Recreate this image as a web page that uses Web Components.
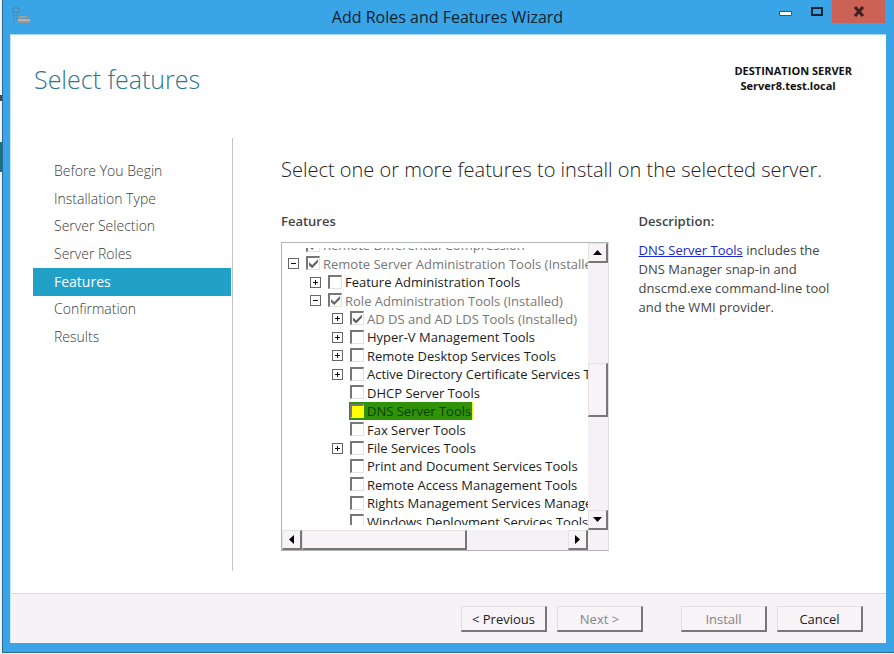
<!DOCTYPE html>
<html lang="en">
<head>
<meta charset="utf-8">
<title>Add Roles and Features Wizard</title>
<style>
html, body { margin: 0; }
body { background: #fdfdfd; color: #222; font: 13px/18px "Open Sans", "Noto Sans", sans-serif; }
</style>
</head>
<body>
<wizard-window caption="Add Roles and Features Wizard">
  <wizard-header slot="header" heading="Select features" server="Server8.test.local"></wizard-header>
  <wizard-steps slot="steps" current="Features"></wizard-steps>
  <feature-picker></feature-picker>
  <wizard-footer slot="footer"></wizard-footer>
</wizard-window>

<script>
function define(name, render) {
  customElements.define(name, class extends HTMLElement {
    connectedCallback() {
      if (!this.shadowRoot) {
        this.attachShadow({ mode: 'open' }).innerHTML = '<style>*{box-sizing:border-box}button{font:inherit;color:inherit;padding:0;margin:0}</style>' + render(this);
      }
    }
  });
}

define('wizard-window', el => `
<style>
:host { display: flex; flex-direction: column; box-sizing: border-box; min-height: 100vh; padding: 0 0 1px 2px;
  background: linear-gradient(#3f4a50,#3f4a50) 0 95px / 2px 6px no-repeat, linear-gradient(#17727c,#17727c) 0 142px / 2px 30px no-repeat, #eef4f7; }
.frame { flex: 1; display: flex; flex-direction: column; background: #39a5e6; border: solid #2a6c95; border-width: 0 0 1px 1px; padding: 0 8px 9px 7px; }
header { height: 34px; padding-right: 1px; display: grid; grid-template-columns: 116px 1fr 116px; align-items: start; }
header h1 { margin: 0; font-size: 16px; line-height: 34px; font-weight: 400; text-align: center; color: #10222e; white-space: nowrap; }
.app { margin: 6px 0 0 1px; opacity: .75; }
.ctl { display: flex; justify-content: flex-end; }
.ctl button { flex: none; border: 0; background: none; height: 23px; width: 31px; display: flex; align-items: center; justify-content: center; }
.ctl .close { width: 53px; background: #cc6155; }
.page { flex: 1; display: flex; flex-direction: column; background: #fff; border-left: 1px solid #c9e7fa; border-top: 1px solid #a9d6f4; }
.body { flex: 1; display: grid; grid-template-columns: 200px minmax(0, 1fr); column-gap: 48px; padding: 0 0 22px 22px; }
</style>
<div class="frame">
  <header>
    <svg class="app" width="22" height="20" viewBox="0 0 22 20" fill="none" aria-hidden="true">
      <path d="M2 2h6v4H2z" fill="#4f9dca" stroke="#467f9f"/><path d="M3 7v10M6 7v7h2" stroke="#5189a8"/><path d="M3 4h4" stroke="#6fadcf"/>
      <path d="M6 10l2-1h9l2 3v4H7z" fill="#858e93"/><path d="M8 11h8" stroke="#b7c0c4"/><path d="M7 13h12v3q-6 2-12 0z" fill="#e2b795"/><path d="M8 16h10" stroke="#b56d48"/>
    </svg>
    <h1>${el.getAttribute('caption')}</h1>
    <div class="ctl">
      <button aria-label="Minimize"><svg width="15" height="23"><path d="M1.5 11.500h12v4h-12z" fill="#fff" stroke="#33586e"/></svg></button>
      <button aria-label="Maximize"><svg width="13" height="23"><path d="M2 8h10v7H2z" fill="none" stroke="#17252e" stroke-width="2"/></svg></button>
      <button class="close" aria-label="Close"><svg width="12" height="11" viewBox="0 0 12 11"><path d="M2 1l8 9M10 1L2 10" stroke="#3b211f" stroke-width="3"/></svg></button>
    </div>
  </header>
  <div class="page">
    <slot name="header"></slot>
    <div class="body"><slot name="steps"></slot><slot></slot></div>
    <slot name="footer"></slot>
  </div>
</div>`);

define('wizard-header', el => `
<style>
:host { display: flex; justify-content: space-between; align-items: flex-start; height: 103px; padding: 24px 34px 0 23px; box-sizing: border-box; }
h2 { margin: 0; font-size: 25px; line-height: 40px; font-weight: 300; color: #2b7590; }
.dest { margin-top: 4px; font-size: 11px; line-height: 15px; font-weight: 700; color: #111; }
p { margin: 0; } p + p { padding-left: 6px; }
</style>
<h2>${el.getAttribute('heading')}</h2>
<div class="dest"><p>DESTINATION SERVER</p><p>${el.getAttribute('server')}</p></div>`);

define('wizard-steps', el => `
<style>
:host { display: block; border-right: 1px solid #c3c3c3; padding: 19px 1px 0 0; }
ol { list-style: none; margin: 0; padding: 0; height: 194px; display: grid; grid-auto-rows: 1fr; }
a { height: 100%; display: flex; align-items: center; padding-left: 21px; color: #3a3a3a; font-size: 14px; font-weight: 300; text-decoration: none; }
a[aria-current] { background: #22a1c8; color: #fff; font-weight: 400; }
</style>
<nav aria-label="Steps"><ol>${['Before You Begin', 'Installation Type', 'Server Selection', 'Server Roles', 'Features', 'Confirmation', 'Results']
  .map(s => `<li><a href="#"${s === el.getAttribute('current') ? ' aria-current="step"' : ''}>${s}</a></li>`).join('')}</ol></nav>`);

define('feature-picker', () => `
<style>
:host { display: block; padding-top: 16px; }
h3 { margin: 0; font-size: 20px; line-height: 32px; font-weight: 350; color: #222; white-space: nowrap; }
.cols { display: grid; grid-template-columns: minmax(0, 327fr) minmax(0, 247fr); gap: 30px; margin-top: 26px; }
h4 { margin: 0; font-size: 13px; line-height: 18px; font-weight: 600; color: #444; }
feature-tree { margin-top: 12px; }
p { margin: 11px 0 0; max-width: 200px; line-height: 19px; color: #444; }
a { color: #1a28cc; }
</style>
<h3>Select one or more features to install on the selected server.</h3>
<div class="cols">
  <section><h4>Features</h4><feature-tree></feature-tree></section>
  <section><h4>Description:</h4><p><a href="#">DNS Server Tools</a> includes the DNS Manager snap-in and dnscmd.exe command-line tool and the WMI provider.</p></section>
</div>`);

define('feature-tree', () => `
<style>
:host { display: grid; grid-template-columns: minmax(0, 1fr) 20px; border: 1px solid #b5b5b5; border-right-color: #ddd; background: #fff; }
.view { height: 277px; margin: 5px 0; overflow: hidden; }
.rows { height: 295px; margin-top: -12px; display: grid; grid-auto-rows: 1fr; }
</style>
<div class="view"><div class="rows" role="tree">
<tree-row level="0" checked disabled>Remote Differential Compression</tree-row>
<tree-row level="0" toggle="minus" checked disabled>Remote Server Administration Tools (Installed)</tree-row>
<tree-row level="1" toggle="plus">Feature Administration Tools</tree-row>
<tree-row level="1" toggle="minus" checked disabled>Role Administration Tools (Installed)</tree-row>
<tree-row level="2" toggle="plus" checked disabled>AD DS and AD LDS Tools (Installed)</tree-row>
<tree-row level="2" toggle="plus">Hyper-V Management Tools</tree-row>
<tree-row level="2" toggle="plus">Remote Desktop Services Tools</tree-row>
<tree-row level="2" toggle="plus">Active Directory Certificate Services Tools</tree-row>
<tree-row level="2">DHCP Server Tools</tree-row>
<tree-row level="2" selected>DNS Server Tools</tree-row>
<tree-row level="2">Fax Server Tools</tree-row>
<tree-row level="2" toggle="plus">File Services Tools</tree-row>
<tree-row level="2">Print and Document Services Tools</tree-row>
<tree-row level="2">Remote Access Management Tools</tree-row>
<tree-row level="2">Rights Management Services Management Tools</tree-row>
<tree-row level="2">Windows Deployment Services Tools</tree-row>
</div></div>
<scroll-bar dir="v"></scroll-bar>
<scroll-bar dir="h"></scroll-bar>
<scroll-bar dir="corner"></scroll-bar>`);

define('tree-row', el => {
  const t = el.getAttribute('toggle');
  const off = el.hasAttribute('disabled');
  const sel = el.hasAttribute('selected');
  return `
<style>
:host { display: flex; align-items: center; padding-left: ${6 + 22 * el.getAttribute('level')}px; white-space: nowrap; min-height: 0; color: ${off ? '#777' : '#1c1c1c'}; }
.t { flex: none; width: 11px; height: 11px; border: 1px solid #666; background: #fff; display: flex; }
i { flex: none; width: 11px; }
label { height: 100%; display: flex; align-items: center; margin-left: 6px; padding: 0 1px; line-height: 18px; ${sel ? 'background:#2f9208;color:#0b3f00;box-shadow:1px 0 #e7f024;' : ''} }
input { appearance: none; flex: none; width: 14px; height: 14px; margin: 0 3px 1px 0; border: solid #777; border-width: 2px 1px 1px 2px; border-right-color: #e2e2e2; border-bottom-color: #e2e2e2; background: ${sel ? '#ff0' : '#fff'}; display: grid; place-items: center; }
input:checked::before { content: ""; width: 9px; height: 9px; background: #666; clip-path: polygon(0 35%, 36% 65%, 100% 0, 100% 35%, 36% 100%, 0 70%); }
</style>
${t ? `<button class="t" aria-label="${t === 'plus' ? 'Expand' : 'Collapse'}"><svg width="9" height="9"><path d="M2 4.500h5${t === 'plus' ? 'M4.500 2v5' : ''}" stroke="#111"/></svg></button>` : '<i></i>'}
<label><input type="checkbox"${el.hasAttribute('checked') ? ' checked' : ''}${off ? ' disabled' : ''}><slot></slot></label>`;
});

define('scroll-bar', el => {
  const d = el.getAttribute('dir');
  const base = `<style>
:host { display: flex; background: #f5f1f6; }
button, .thumb { flex: none; background: #f7f3f7; border: solid; border-width: 1px 2px 2px 1px; border-color: #e5e1e5 #777 #777 #e5e1e5; display: flex; align-items: center; justify-content: center; }
.v { flex: 1; display: flex; flex-direction: column; }
.v button { height: 20px; } .v .thumb { height: 54px; }
.h { flex: 1; display: flex; height: 20px; }
.h button { width: 20px; } .h .thumb { flex: 164; }
.v .a { flex: 101; } .v .b { flex: 93; } .h .b { flex: 102; }
</style>`;
  if (d === 'v') return base + `<div class="v"><button aria-label="Scroll up"><svg width="9" height="5"><path d="M0 5l4.500-5L9 5z"/></svg></button><div class="a"></div><div class="thumb"></div><div class="b"></div><button aria-label="Scroll down"><svg width="9" height="5"><path d="M0 0l4.500 5L9 0z"/></svg></button></div>`;
  if (d === 'h') return base + `<div class="h"><button aria-label="Scroll left"><svg width="5" height="9"><path d="M5 0L0 4.500 5 9z"/></svg></button><div class="thumb"></div><div class="b"></div><button aria-label="Scroll right"><svg width="5" height="9"><path d="M0 0l5 4.500L0 9z"/></svg></button></div>`;
  return base;
});

define('wizard-footer', () => `
<style>
:host { display: flex; justify-content: flex-end; gap: 10px; padding: 12px 23px 11px; background: #f6f2f6; border-top: 1px solid #dedade; }
button { width: 86px; height: 26px; background: #f7f3f7; border: solid; border-width: 1px 2px 2px 1px; border-color: #e0dce0 #777 #777 #e0dce0; color: #222; }
button:disabled { color: #858585; }
.gap { margin-left: 28px; }
</style>
<button>&lt; Previous</button><button disabled>Next &gt;</button><button class="gap" disabled>Install</button><button>Cancel</button>`);
</script>
</body>
</html>
